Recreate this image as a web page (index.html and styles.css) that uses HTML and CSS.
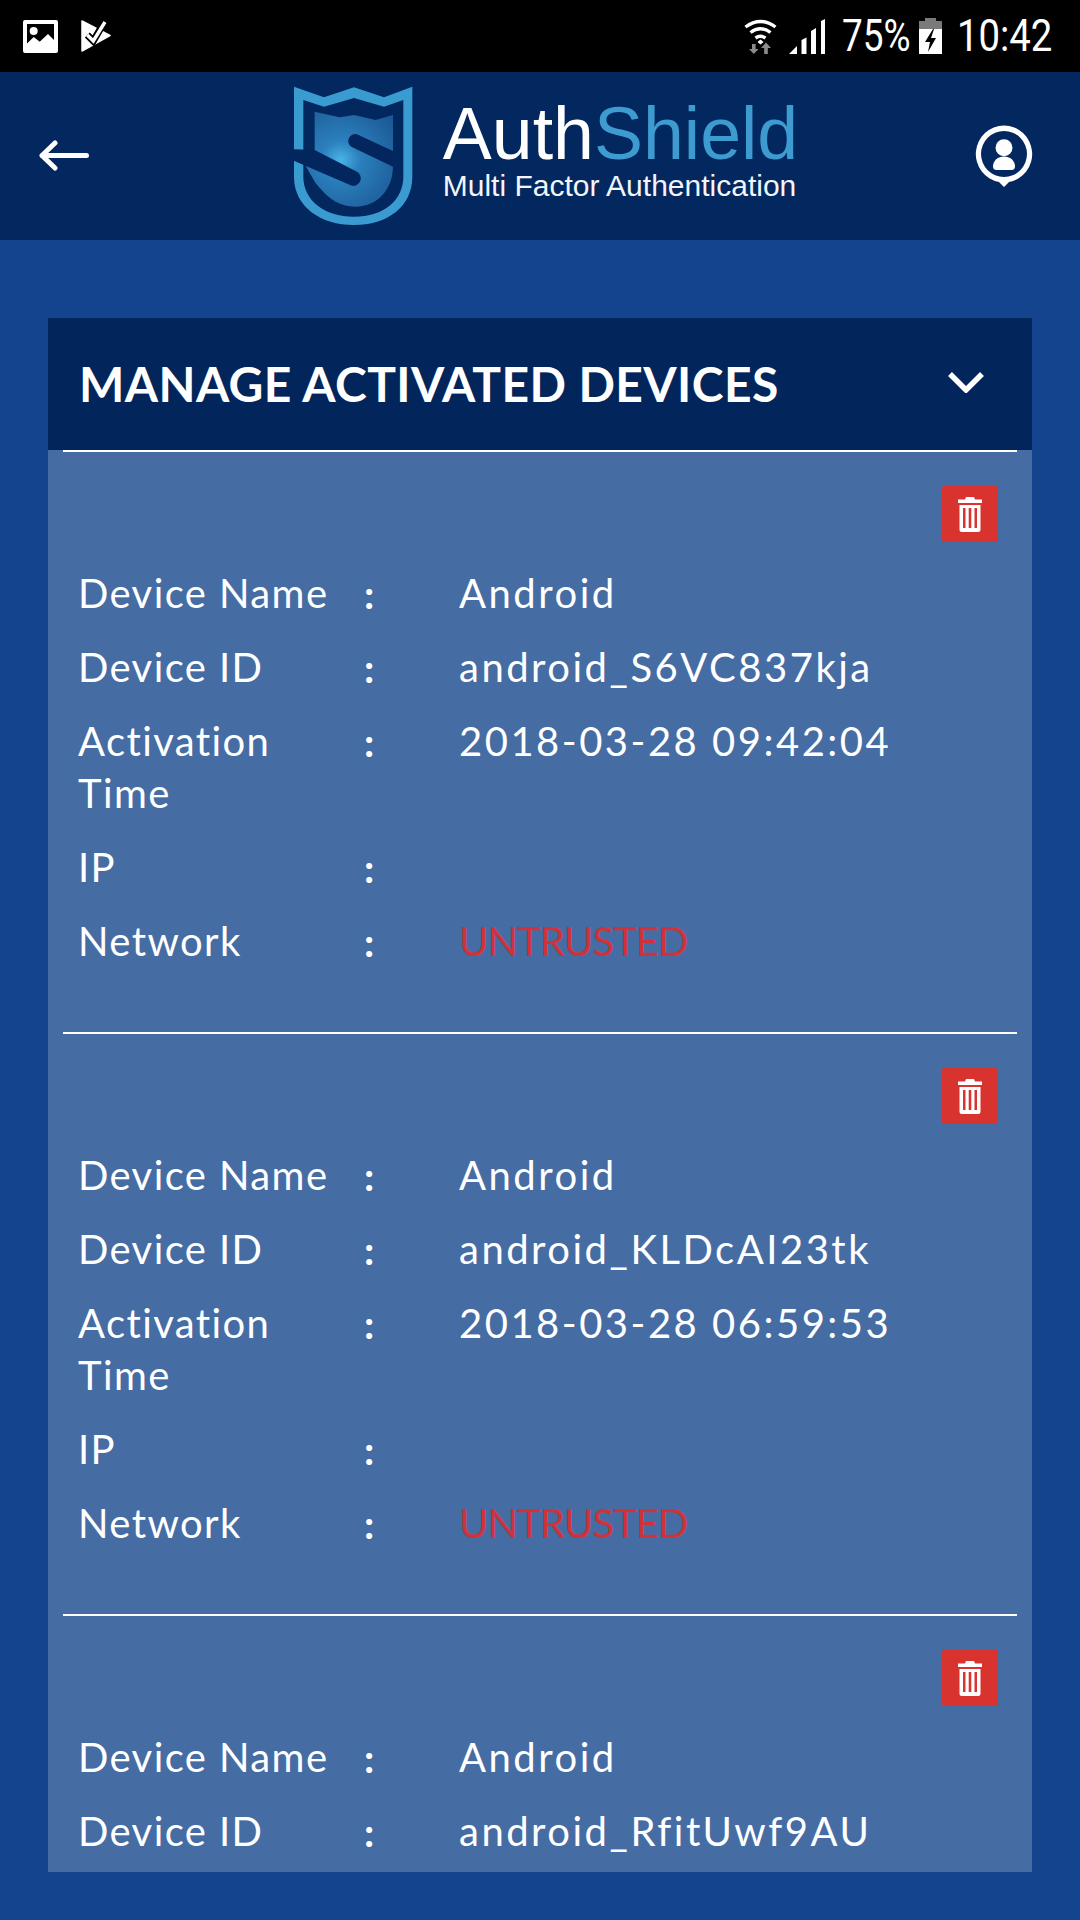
FILE: index.html
```html
<!DOCTYPE html>
<html lang="en">
<head>
<meta charset="utf-8">
<title>AuthShield</title>
<link rel="stylesheet" href="styles.css">
</head>
<body>
<div class="status">
  <div class="status-left">
    <svg class="ic-image" viewBox="0 0 35 33"><path fill="#fff" fill-rule="evenodd" d="M2 0h31a2 2 0 0 1 2 2v29a2 2 0 0 1-2 2H2a2 2 0 0 1-2-2V2a2 2 0 0 1 2-2zM4 23.500l6.700-6.500 6 4.700L25 14l6 6V4H4z"/><circle cx="10.700" cy="11" r="4" fill="#fff"/></svg>
    <svg class="ic-check" viewBox="0 0 30 32"><path fill="#fff" stroke="#fff" stroke-width="1.500" stroke-linejoin="round" d="M1 1l28 14.500L1 31z"/><path fill="none" stroke="#000" stroke-width="7" d="M6.300 15l6 6L25 -1"/><path fill="none" stroke="#fff" stroke-width="3.400" d="M6.300 15l6 6L24 2"/></svg>
  </div>
  <div class="status-right">
    <svg class="ic-wifi" viewBox="0 0 33 36"><g fill="none" stroke="#fff" stroke-width="3.400"><path d="M1.500 9q15-11 30 0"/><path d="M6.500 14.500q10-7.500 20 0"/><path d="M11.500 20q5-3.500 10 0"/></g><path fill="#fff" d="M16.500 21.500l3 2.500-3 2.500-3-2.500z"/><path fill="#8a8a8a" d="M8 26h3.600v5h3L9.800 36 5 31h3zM22 24.500l5 5.500h-3.200v6h-3.600v-6H17z"/></svg>
    <svg class="ic-signal" viewBox="0 0 36 35"><path fill="#fff" d="M0 35l8-8v8zM12.500 21l5-2.500V35h-5zM22 12l5-3v26h-5zM32 2l4-2v35h-4z"/></svg>
    <span class="pct">75%</span>
    <svg class="ic-batt" viewBox="0 0 23 36"><path fill="#7a7a7a" d="M6 0h11v3h6v8H0V3h6z"/><path fill="#fff" d="M0 11h23v25H0z"/><path fill="#000" d="M14 11L6 24h5l-2 10 8-14h-5l3-9z"/></svg>
    <span class="clock">10:42</span>
  </div>
</div>

<header class="topbar">
  <svg class="ic-back" viewBox="0 0 50 31"><path fill="none" stroke="#fff" stroke-width="5" stroke-linecap="round" stroke-linejoin="round" d="M47.500 15.500H3M16 3L3 15.500 16 28"/></svg>
  <div class="logo">
    <svg class="shield" viewBox="0 0 390 420">
      <defs>
        <radialGradient id="lit" gradientUnits="userSpaceOnUse" cx="170" cy="222" r="190">
          <stop offset="0" stop-color="#49b4e6"/>
          <stop offset=".3" stop-color="#2b80bd"/>
          <stop offset="1" stop-color="#1c5a96"/>
        </radialGradient>
      </defs>
      <path fill="#3a9bd0" fill-rule="evenodd" d="M30 2l90 32 90-30 90 30 85-32v270c0 90-75 145-175 145S30 362 30 272zM58 42v230c0 70 62 120 152 120s148-50 148-120V42l-58 20-90-26-90 26z"/>
      <path fill="url(#lit)" d="M92 77l75 17 43-7 65 15 52-15v153c0 70-47 122-112 122-65 0-95-42-120-70l-30-52 27-40z"/>
      <path fill="#03265e" d="M222 146l105 49v47l-122-58a20 20 0 0 1 17-38z"/>
      <path fill="#03265e" d="M5 214l25-24 62 2 124 64a22 22 0 0 1-16 42z"/>
    </svg>
    <div class="wordmark">
      <div class="brand">Auth<span class="brand-accent">Shield</span></div>
      <div class="tagline">Multi Factor Authentication</div>
    </div>
  </div>
  <svg class="ic-profile" viewBox="0 0 58 62"><path fill="#fff" fill-rule="evenodd" d="M29 0.500a28.500 28.500 0 0 1 5 56.500L29 62l-5-5A28.500 28.500 0 0 1 29 0.500zm0 5.500a23 23 0 1 0 0 46 23 23 0 0 0 0-46z"/><circle cx="29" cy="22.700" r="8.500" fill="#fff"/><path fill="#fff" d="M18 41.500c0-6 5-10 11-10s11 4 11 10c0 2.500-1.500 3.500-3.500 3.500h-15C19.500 45 18 44 18 41.500z"/></svg>
</header>

<main class="content">
  <section class="panel">
    <div class="panel-head">
      <h1 class="panel-title">MANAGE ACTIVATED DEVICES</h1>
      <svg class="ic-chevron" viewBox="0 0 36 21"><path fill="none" stroke="#fff" stroke-width="5.500" d="M2 2l16 16L34 2"/></svg>
    </div>

    <article class="device">
      <div class="device-actions"><button class="trash"><svg viewBox="0 0 24 35" class="ic-trash"><path fill="#fff" d="M8 0h8l1 2.500h7V6H0V2.500h7zM1.500 8h21v24.500a2.500 2.500 0 0 1-2.500 2.500H4a2.500 2.500 0 0 1-2.500-2.500z"/><path fill="#d9332f" d="M5 11h2.500v20H5zM10.700 11h2.600v20h-2.600zM16.500 11H19v20h-2.500z"/></svg></button></div>
      <dl class="rows">
        <dt>Device Name</dt><dd class="sep">:</dd><dd>Android</dd>
        <dt>Device ID</dt><dd class="sep">:</dd><dd>android_S6VC837kja</dd>
        <dt>Activation Time</dt><dd class="sep">:</dd><dd>2018-03-28 09:42:04</dd>
        <dt>IP</dt><dd class="sep">:</dd><dd></dd>
        <dt>Network</dt><dd class="sep">:</dd><dd class="untrusted">UNTRUSTED</dd>
      </dl>
    </article>

    <article class="device">
      <div class="device-actions"><button class="trash"><svg viewBox="0 0 24 35" class="ic-trash"><path fill="#fff" d="M8 0h8l1 2.500h7V6H0V2.500h7zM1.500 8h21v24.500a2.500 2.500 0 0 1-2.500 2.500H4a2.500 2.500 0 0 1-2.500-2.500z"/><path fill="#d9332f" d="M5 11h2.500v20H5zM10.700 11h2.600v20h-2.600zM16.500 11H19v20h-2.500z"/></svg></button></div>
      <dl class="rows">
        <dt>Device Name</dt><dd class="sep">:</dd><dd>Android</dd>
        <dt>Device ID</dt><dd class="sep">:</dd><dd>android_KLDcAI23tk</dd>
        <dt>Activation Time</dt><dd class="sep">:</dd><dd>2018-03-28 06:59:53</dd>
        <dt>IP</dt><dd class="sep">:</dd><dd></dd>
        <dt>Network</dt><dd class="sep">:</dd><dd class="untrusted">UNTRUSTED</dd>
      </dl>
    </article>

    <article class="device">
      <div class="device-actions"><button class="trash"><svg viewBox="0 0 24 35" class="ic-trash"><path fill="#fff" d="M8 0h8l1 2.500h7V6H0V2.500h7zM1.500 8h21v24.500a2.500 2.500 0 0 1-2.500 2.500H4a2.500 2.500 0 0 1-2.500-2.500z"/><path fill="#d9332f" d="M5 11h2.500v20H5zM10.700 11h2.600v20h-2.600zM16.500 11H19v20h-2.500z"/></svg></button></div>
      <dl class="rows">
        <dt>Device Name</dt><dd class="sep">:</dd><dd>Android</dd>
        <dt>Device ID</dt><dd class="sep">:</dd><dd>android_RfitUwf9AU</dd>
      </dl>
    </article>
  </section>
</main>
</body>
</html>
```

FILE: styles.css
```css
* { box-sizing: border-box; }
html, body { margin: 0; padding: 0; }
body {
  width: 1080px;
  height: 1920px;
  overflow: hidden;
  display: flex;
  flex-direction: column;
  background: #15448f;
  color: #fff;
  font-family: Lato, "Open Sans", sans-serif;
}

.status {
  height: 72px;
  flex: none;
  background: #000;
  display: flex;
  align-items: center;
  justify-content: space-between;
  padding: 0 27px 0 23px;
}
.status-left, .status-right { display: flex; align-items: center; }
.ic-image { width: 35px; height: 33px; margin-right: 23px; }
.ic-check { width: 30px; height: 32px; }
.ic-wifi { width: 33px; height: 36px; margin-right: 12px; }
.ic-signal { width: 36px; height: 35px; margin-right: 17px; }
.ic-batt { width: 23px; height: 36px; margin-right: 15px; }
.pct, .clock {
  font-family: Roboto, sans-serif;
  font-size: 44px;
  line-height: 44px;
  white-space: nowrap;
  display: inline-block;
  transform-origin: left center;
}
.pct { width: 68px; margin-right: 9px; transform: scaleX(.84); }
.clock { width: 96px; transform: scaleX(.87); }

.topbar {
  height: 168px;
  flex: none;
  background: #03275f;
  display: flex;
  align-items: center;
  justify-content: space-between;
  padding: 0 47px 0 39px;
}
.ic-back { width: 50px; height: 31px; margin-top: -2px; }
.ic-profile { width: 58px; height: 62px; }
.logo { display: flex; align-items: center; margin-left: 18px; }
.shield { width: 130px; height: 140px; margin-right: 29px; }
.wordmark { font-family: "Liberation Sans", Arial, sans-serif; margin-top: -8px; }
.brand { font-size: 73.500px; line-height: 68px; color: #fff; white-space: nowrap; }
.brand-accent { color: #3e9bd0; }
.tagline { font-size: 30px; line-height: 36px; color: #f2f5fa; white-space: nowrap; }

.content {
  flex: 1;
  min-height: 0;
  display: flex;
  padding: 78px 48px 48px;
}
.panel {
  flex: 1;
  background: #466ca4;
  overflow: hidden;
}
.panel-head {
  height: 132px;
  background: #02265c;
  display: flex;
  align-items: center;
  justify-content: space-between;
  padding: 0 48px 0 31px;
}
.panel-title {
  margin: 0;
  font-size: 48px;
  font-weight: 700;
  letter-spacing: 0.400px;
  line-height: 1;
}
.ic-chevron { width: 36px; height: 21px; margin-top: -4px; }

.device {
  margin: 0 15px;
  border-top: 2px solid #fff;
  padding: 34px 2px 65px;
}
.device-actions { display: flex; justify-content: flex-end; padding-right: 17px; }
.trash {
  width: 56px;
  height: 56px;
  padding: 0;
  border: 0;
  border-radius: 2px;
  background: #d9332f;
  display: flex;
  align-items: center;
  justify-content: center;
}
.ic-trash { width: 24px; height: 35px; }

.rows {
  margin: 25px 0 0;
  display: grid;
  grid-template-columns: 286px 95px 1fr;
  row-gap: 22px;
  padding-left: 13px;
  font-size: 40px;
  line-height: 52px;
  letter-spacing: 2.500px;
}
.rows dt, .rows dd { margin: 0; }
.rows dt { letter-spacing: 1.400px; padding-right: 16px; }
.rows .sep { font-weight: 700; line-height: 49px; padding-top: 3px; letter-spacing: 0; }
.rows .untrusted { color: #cf3339; letter-spacing: -0.900px; }
```
